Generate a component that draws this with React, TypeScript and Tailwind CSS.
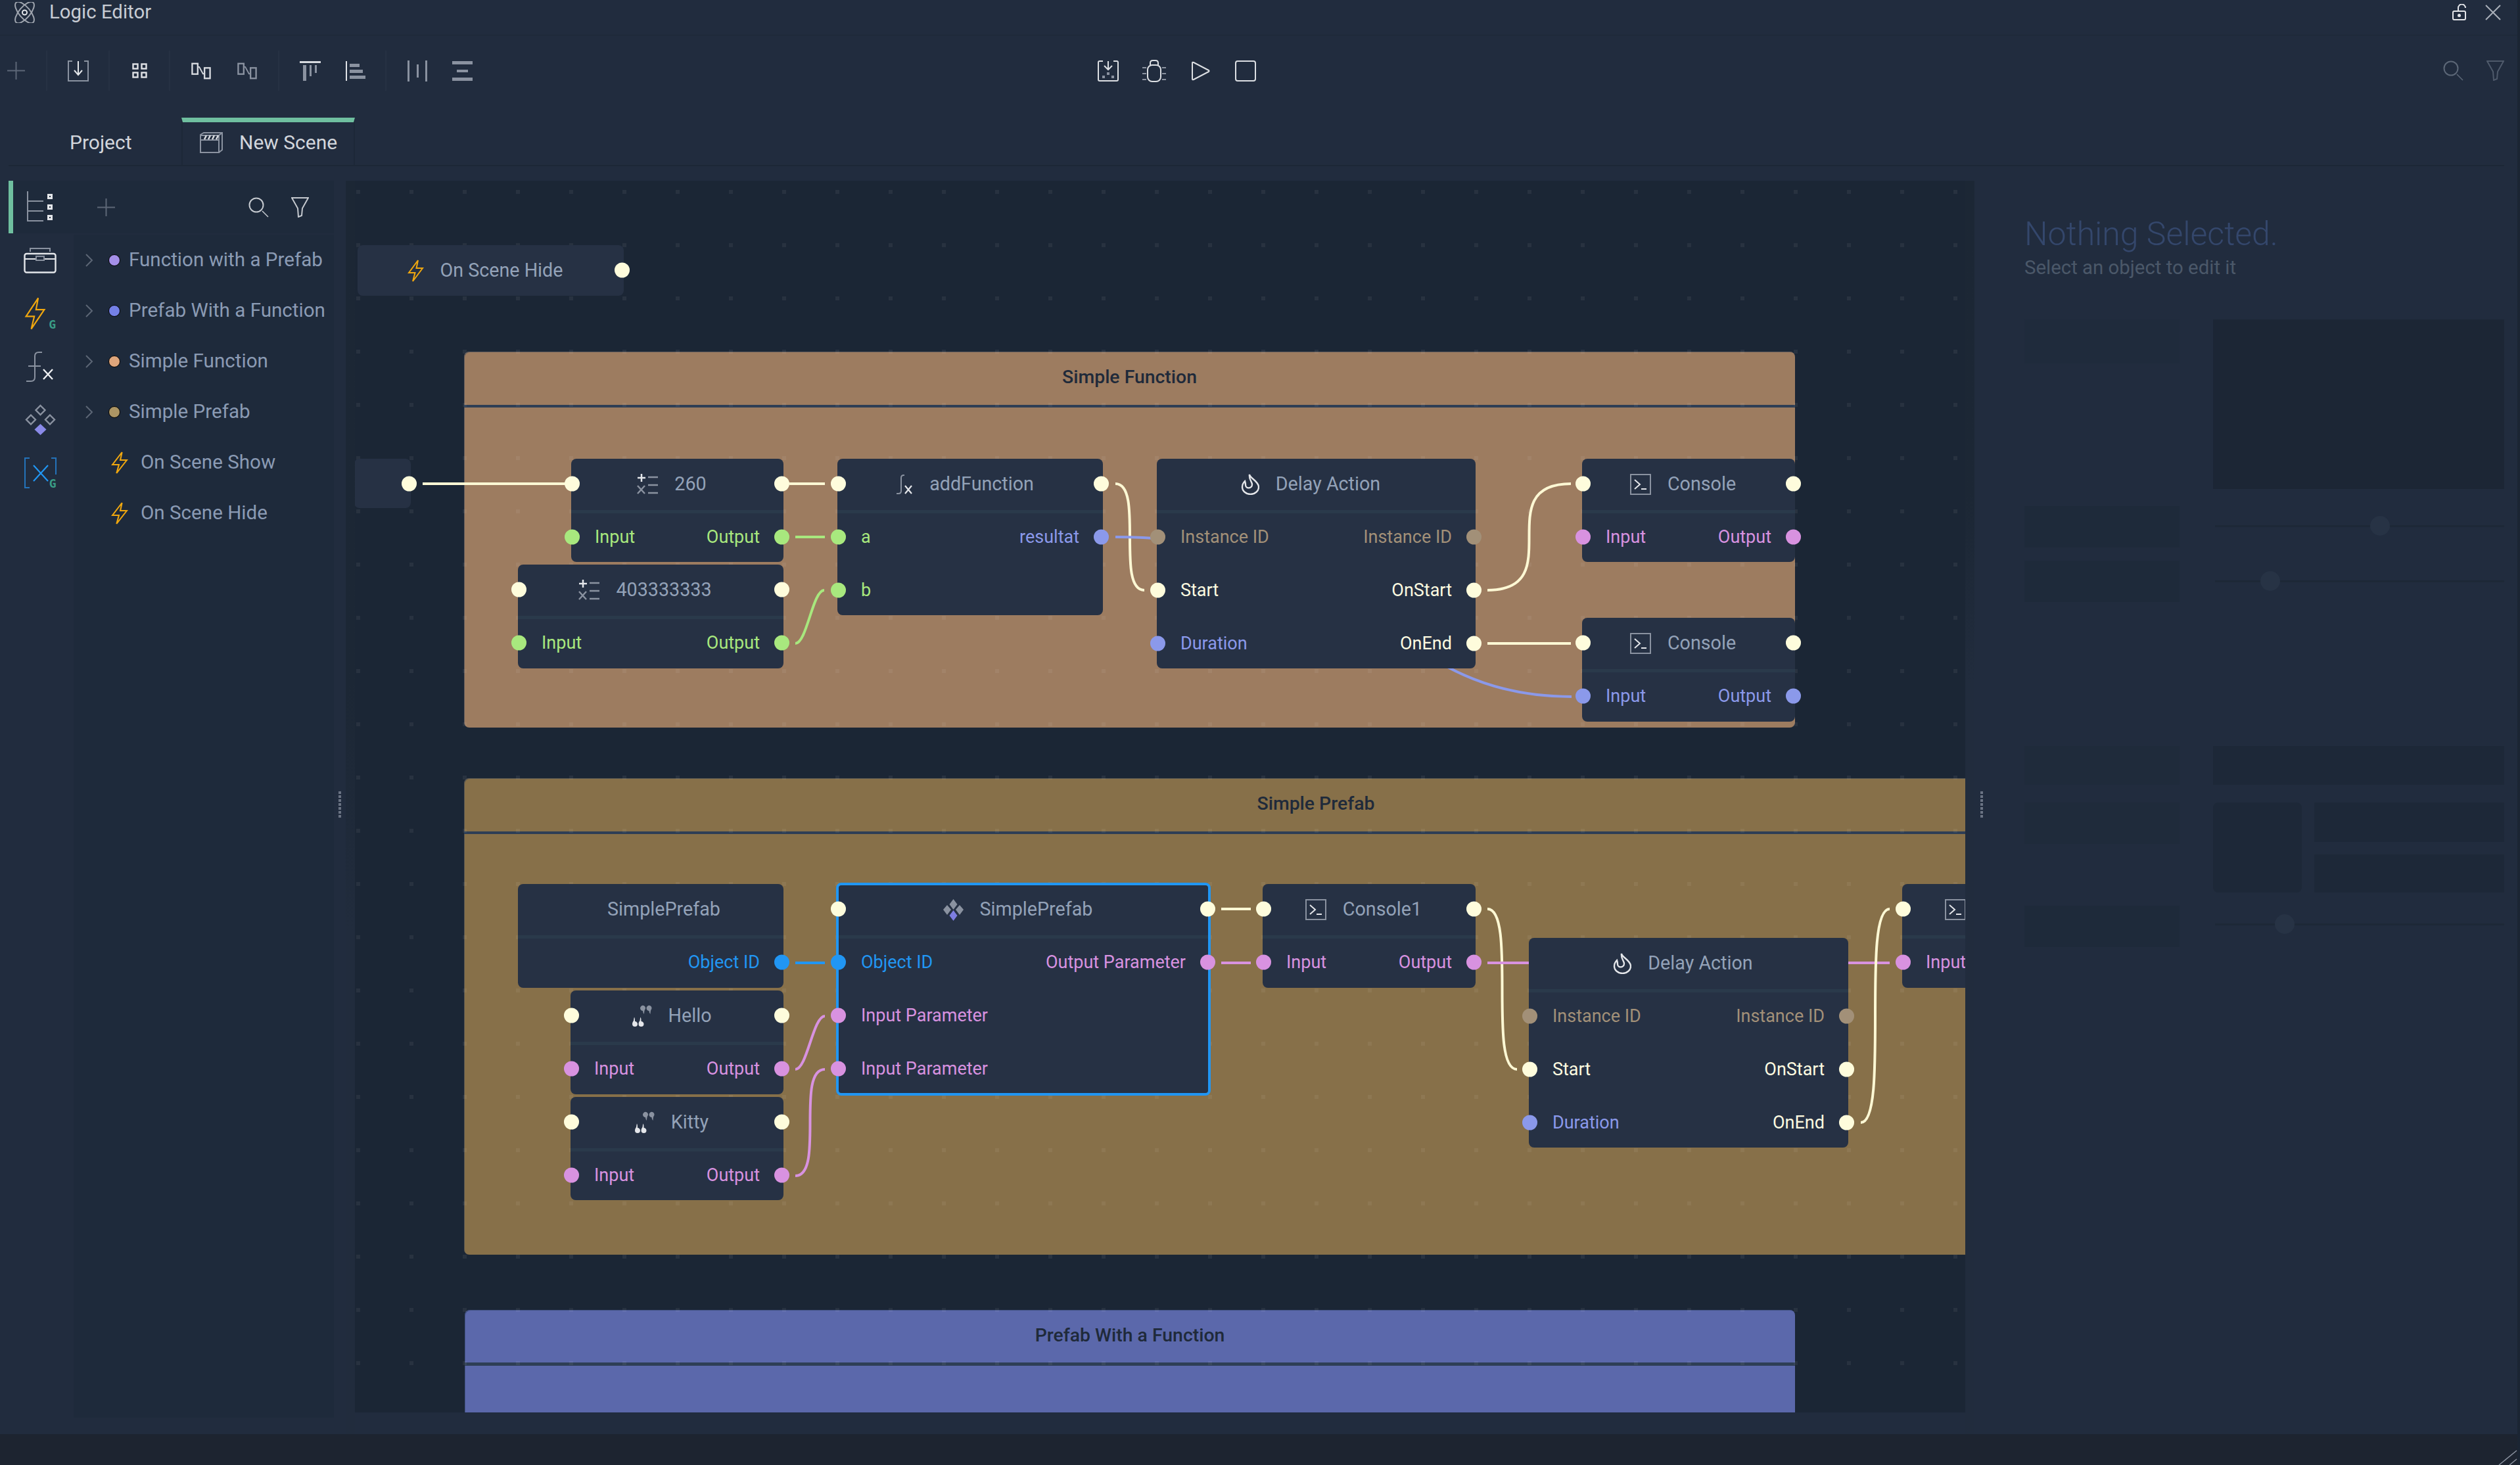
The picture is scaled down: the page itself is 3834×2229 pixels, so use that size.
import React from 'react';

type Tone = 'cream' | 'green' | 'blue' | 'pink' | 'sky' | 'tan';

const TEXT: Record<Tone, string> = {
  cream: 'text-[#fdfbe0]',
  green: 'text-[#a8e87e]',
  blue: 'text-[#8b99ea]',
  pink: 'text-[#d892e0]',
  sky: 'text-[#2196f3]',
  tan: 'text-[#a29078]',
};
const PIN: Record<Tone, string> = {
  cream: 'bg-[#fefcdc]',
  green: 'bg-[#a8e87e]',
  blue: 'bg-[#8b99ea]',
  pink: 'bg-[#d892e0]',
  sky: 'bg-[#2196f3]',
  tan: 'bg-[#a29078]',
};
const STROKE: Record<Tone, string> = {
  cream: '#fdf8d4',
  green: '#a8e87e',
  blue: '#8b99ea',
  pink: '#d892e0',
  sky: '#2196f3',
  tan: '#a29078',
};

const WHITE = '#e4e6ea';
const GREY = '#8a92a0';

/* ---------- icons ---------- */

function Lightning({ w = 25, h = 34 }: { w?: number; h?: number }) {
  return (
    <svg width={w} height={h} viewBox="0 0 25 34" preserveAspectRatio="none" fill="none" stroke="#f0a70f" strokeWidth={w > 28 ? 1.6 : 2}>
      <path d="M16 1 2 20h9.5L8 33l15-20h-9.5z" />
    </svg>
  );
}

function NumberIcon() {
  return (
    <svg width="32" height="32" viewBox="0 0 32 32" fill="none" stroke={GREY} strokeWidth="2.5">
      <path d="M7 0v12M1 6h12" stroke={WHITE} />
      <path d="M17 5h15M17 17h15M17 29h15" />
      <path d="M1 18l11 12M12 18 1 30" />
    </svg>
  );
}

function FxIcon() {
  return (
    <svg width="27" height="30" viewBox="0 0 27 30" fill="none">
      <path d="M14 1h-1c-3 0-4 2-4 4v20c0 2-1 4-4 4H2" stroke={GREY} strokeWidth="2" />
      <path d="M15 17l10 12M25 17 15 29" stroke={WHITE} strokeWidth="2.2" />
    </svg>
  );
}

function FlameIcon() {
  return (
    <svg width="28" height="32" viewBox="0 0 28 32" fill="none" stroke={WHITE} strokeWidth="2.4" strokeLinecap="round">
      <path d="M13 1c1 6 14 10 14 19a12.5 11 0 0 1-25 0c0-4 2-7 4-9 1 3 1 5 1 6 0 6 10 6 10-1 0-4-5-7-4-15z" />
    </svg>
  );
}

function ConsoleIcon() {
  return (
    <svg width="32" height="32" viewBox="0 0 32 32" fill="none">
      <rect x="1" y="1" width="30" height="30" stroke={GREY} strokeWidth="2" />
      <path d="M7 9l8 7-8 7" stroke={WHITE} strokeWidth="2" />
      <path d="M17 23h8" stroke={WHITE} strokeWidth="2" />
    </svg>
  );
}

function QuoteIcon() {
  return (
    <svg width="31" height="34" viewBox="0 0 31 34">
      <path d="M13 5a4 4 0 1 1 7 2.500c-.7 1.500-1 4-1 6.500-1-1-2-3-2-5-2.200 0-4-2-4-4zM22.500 5a4 4 0 1 1 7 2.500c-.7 1.500-1 4-1 6.500-1-1-2-3-2-5-2.200 0-4-2-4-4z" fill={GREY} />
      <path d="M9 29a4 4 0 1 1-8 0c0-2 1-4 2-5 .3-2 .5-4 1-5.500 1 2 1 4 1 6.500 2.200 0 4 2 4 4zM18.500 29a4 4 0 1 1-8 0c0-2 1-4 2-5 .3-2 .5-4 1-5.500 1 2 1 4 1 6.500 2.200 0 4 2 4 4z" fill={WHITE} />
    </svg>
  );
}

function PrefabIcon() {
  return (
    <svg width="31" height="33" viewBox="0 0 31 33">
      <path d="M15.500 0l6 8-6 8-6-8zM6 9l6 7-6 8-6-8zM25 9l6 7-6 8-6-8z" fill={GREY} />
      <path d="M15.500 17l6 8-6 8-6-8z" fill="#7d7de0" />
    </svg>
  );
}

function SearchIcon({ color }: { color: string }) {
  return (
    <svg width="31" height="31" viewBox="0 0 31 31" fill="none" stroke={color} strokeWidth="2">
      <circle cx="12" cy="12" r="10.500" />
      <path d="M21 21l9 9" strokeWidth="1.500" />
    </svg>
  );
}

function FilterIcon({ color }: { color: string }) {
  return (
    <svg width="27" height="31" viewBox="0 0 27 31" fill="none" stroke={color} strokeWidth="2">
      <path d="M1 1h25L17 17l-1 11-5 2-1-13z" />
    </svg>
  );
}

function PlusIcon() {
  return (
    <svg width="27" height="27" viewBox="0 0 27 27" stroke="#5d6777" strokeWidth="2">
      <path d="M13.500 0v27M0 13.500h27" />
    </svg>
  );
}

function Logo() {
  return (
    <svg width="33" height="32" viewBox="0 0 33 32" fill="none" stroke="#a0a6b0" strokeWidth="2">
      <ellipse cx="16.500" cy="16" rx="8.500" ry="20" transform="rotate(-40 16.500 16)" />
      <ellipse cx="16.500" cy="16" rx="8.500" ry="20" transform="rotate(40 16.500 16)" />
      <circle cx="16.500" cy="16" r="3.500" stroke="#e4e6ea" />
    </svg>
  );
}

function Flip({ bright }: { bright: boolean }) {
  const c = bright ? '#d8dbe0' : '#8a92a0';
  return (
    <svg width="30" height="26" viewBox="0 0 32 27" fill="none" stroke={c} strokeWidth="2.500">
      <rect x="1.500" y="1.500" width="9" height="17" />
      <rect x="21.500" y="8.500" width="9" height="17" />
      <path d="M10 7h3l6 11h2" strokeWidth="2" />
    </svg>
  );
}

function TopToolbar() {
  return (
    <div className="flex h-[107px] items-center pr-[20px]">
      <div className="flex w-[70px] pl-[11px]">
        <PlusIcon />
      </div>
      <Group w="w-[95px]">
        <svg width="32" height="32" viewBox="0 0 32 32" fill="none">
          <path d="M7 1H1v30h30V1h-6" stroke={GREY} strokeWidth="2" />
          <path d="M16 1v21M10 15l6 7 6-7" stroke={WHITE} strokeWidth="2" />
        </svg>
      </Group>
      <Group w="w-[92px]">
        <svg width="23" height="23" viewBox="0 0 23 23" fill="none" stroke="#e0e2e6" strokeWidth="2.400">
          <rect x="1.500" y="1.500" width="7" height="7" />
          <rect x="14.500" y="1.500" width="7" height="7" />
          <rect x="1.500" y="14.500" width="7" height="7" />
          <rect x="14.500" y="14.500" width="7" height="7" />
        </svg>
      </Group>
      <Group w="w-[166px]" gap="gap-[40px]">
        <Flip bright />
        <Flip bright={false} />
      </Group>
      <Group w="w-[163px]" gap="gap-[38px]">
        <svg width="32" height="30" viewBox="0 0 32 30">
          <rect x="0" y="0" width="32" height="3" fill="#d8dbe0" />
          <rect x="5" y="6" width="5" height="24" fill={GREY} />
          <rect x="15" y="6" width="3" height="17" fill={GREY} />
          <rect x="23" y="6" width="3" height="12" fill={GREY} />
        </svg>
        <svg width="30" height="30" viewBox="0 0 30 30">
          <rect x="0" y="0" width="2" height="30" fill="#e0e2e6" />
          <rect x="6" y="4" width="15" height="5" fill={GREY} />
          <rect x="6" y="13" width="20" height="5" fill={GREY} />
          <rect x="6" y="22" width="24" height="5" fill={GREY} />
        </svg>
      </Group>
      <Group w="w-[165px]" gap="gap-[38px]">
        <svg width="30" height="32" viewBox="0 0 30 32">
          <rect x="0" y="0" width="3" height="32" fill={GREY} />
          <rect x="14" y="6" width="3" height="20" fill={GREY} />
          <rect x="27" y="0" width="3" height="32" fill={GREY} />
        </svg>
        <svg width="31" height="30" viewBox="0 0 31 30">
          <rect x="0" y="0" width="31" height="5" fill={GREY} />
          <rect x="7" y="13" width="17" height="4" fill={GREY} />
          <rect x="0" y="25" width="31" height="5" fill={GREY} />
        </svg>
      </Group>

      <div className="ml-[919px] flex items-center">
        <svg width="32" height="32" viewBox="0 0 32 32" fill="none">
          <path d="M8 1H3Q1 1 1 3v26q0 2 2 2h26q2 0 2-2V3q0-2-2-2h-5" stroke="#dcdfe3" strokeWidth="2" />
          <path d="M16 1v13M10 8l6 6 6-6" stroke="#dcdfe3" strokeWidth="2" />
          <path d="M14 18h4v4h-4zM7 23h4v4H7zM21 23h4v4h-4z" fill={GREY} />
        </svg>
        <svg className="ml-[36px]" width="36" height="34" viewBox="0 0 36 34" fill="none">
          <rect x="8" y="8" width="20" height="25" rx="7" stroke="#dcdfe3" strokeWidth="2" />
          <path d="M12 8V5q0-4 4-4h4q4 0 4 4v3" stroke="#dcdfe3" strokeWidth="2" />
          <path d="M0 12h6M30 12h6M0 21h6M30 21h6M0 30h6M30 30h6" stroke={GREY} strokeWidth="2.200" />
        </svg>
        <svg className="ml-[39px]" width="28" height="30" viewBox="0 0 28 30" fill="none" stroke="#dcdfe3" strokeWidth="2" strokeLinejoin="round">
          <path d="M1 3q0-2 2-1l23 12q1 1 0 2L3 28q-2 1-2-1z" />
        </svg>
        <svg className="ml-[38px]" width="32" height="32" viewBox="0 0 32 32" fill="none" stroke="#dcdfe3" strokeWidth="2">
          <rect x="1" y="1" width="30" height="30" rx="3" />
        </svg>
      </div>

      <div className="ml-auto flex items-center gap-[35px]">
        <SearchIcon color="#5c6777" />
        <FilterIcon color="#4f5a6b" />
      </div>
    </div>
  );
}

function Group({ w, gap, children }: { w: string; gap?: string; children: React.ReactNode }) {
  return (
    <div className={`flex h-[61px] items-center justify-center border-l-2 border-[#263143] ${w} ${gap ?? ''}`}>
      {children}
    </div>
  );
}

/* ---------- left sidebar ---------- */

const treeItems = [
  { label: 'Function with a Prefab', dot: 'bg-[#a48fe8]' },
  { label: 'Prefab With a Function', dot: 'bg-[#7480e6]' },
  { label: 'Simple Function', dot: 'bg-[#dfa67c]' },
  { label: 'Simple Prefab', dot: 'bg-[#ac9564]' },
];

function Sidebar() {
  return (
    <div className="ml-[13px] flex w-[495px] shrink-0 flex-col pb-[25px]">
      <div className="flex h-[80px] items-center border-l-[7px] border-[#6fbf9f] bg-[#1e2a3b]">
        <div className="ml-[21px]">
          <svg width="39" height="48" viewBox="0 0 39 48" fill="none">
            <path d="M1 0v45h24M1 15h24M1 30h24" stroke={GREY} strokeWidth="2" />
            <path d="M31 4h8v8h-8zM31 20h8v8h-8zM31 36h8v8h-8z" fill="#e4e6ea" />
            <path d="M34 7h2v2h-2zM34 23h2v2h-2zM34 39h2v2h-2z" fill="#1e2a3b" />
          </svg>
        </div>
        <div className="ml-[68px]">
          <PlusIcon />
        </div>
        <div className="ml-auto mr-[38px] flex items-center gap-[34px]">
          <SearchIcon color="#c5c9cf" />
          <FilterIcon color="#c5c9cf" />
        </div>
      </div>
      <div className="flex min-h-0 flex-1">
        <div className="flex w-[99px] shrink-0 flex-col items-center pr-[3px]">
          <RailItem>
            <svg width="50" height="40" viewBox="0 0 50 40" fill="none">
              <path d="M10 7V2h30v5" stroke={GREY} strokeWidth="2" />
              <rect x="1.500" y="10" width="47" height="28.500" rx="3" stroke="#e4e6ea" strokeWidth="2.400" />
              <path d="M2 18h18M30 18h18" stroke="#e4e6ea" strokeWidth="2" />
              <rect x="19" y="14" width="12" height="6" stroke={GREY} strokeWidth="2" />
            </svg>
          </RailItem>
          <RailItem>
            <div className="relative h-[50px] w-[48px]">
              <Lightning w={33} h={50} />
              <span className="absolute bottom-[-1px] right-0 font-['DejaVu_Sans_Mono',monospace] text-[18px] font-bold leading-[18px] text-[#3a9c86]">G</span>
            </div>
          </RailItem>
          <RailItem>
            <svg width="42" height="46" viewBox="0 0 42 46" fill="none">
              <path d="M24 1h-5c-4 0-6 2-6 6v32c0 4-2 6-6 6H0M3 22h19" stroke={GREY} strokeWidth="2" />
              <path d="M26 27l14 15M40 27 26 42" stroke="#f0f1f3" strokeWidth="2.400" />
            </svg>
          </RailItem>
          <RailItem>
            <svg width="47" height="47" viewBox="0 0 47 47" fill="none">
              <path d="M23.500 2l7 7-7 7-7-7zM9 16.500l7 7-7 7-7-7zM38 16.500l7 7-7 7-7-7z" stroke={GREY} strokeWidth="2.400" />
              <path d="M23.500 30l9 8.500-9 8.500-9-8.500z" fill="#8a8ae8" />
            </svg>
          </RailItem>
          <RailItem>
            <div className="relative h-[47px] w-[49px]">
              <svg width="49" height="47" viewBox="0 0 49 47" fill="none">
                <path d="M8 1H1v45h7M41 1h7v25" stroke="#2473ba" strokeWidth="2" />
                <path d="M14 12l22 24M36 12 14 36" stroke="#2196f3" strokeWidth="2.200" />
              </svg>
              <span className="absolute bottom-[-2px] right-0 font-['DejaVu_Sans_Mono',monospace] text-[18px] font-bold leading-[18px] text-[#3a9c86]">G</span>
            </div>
          </RailItem>
        </div>
        <div className="mt-[2px] flex-1 bg-[#1e2a3b] font-['Roboto',sans-serif] text-[29.600px] text-[#8b9bb4]">
          {treeItems.map((item) => (
            <div key={item.label} className="flex h-[77px] items-center whitespace-nowrap pl-[18px]">
              <svg width="12" height="20" viewBox="0 0 12 20" fill="none" stroke="#5c6675" strokeWidth="2">
                <path d="M1 1l9 9-9 9" />
              </svg>
              <span className={`ml-[23px] h-[18px] w-[18px] rounded-full border border-black ${item.dot}`} />
              <span className="ml-[13px]">{item.label}</span>
            </div>
          ))}
          {['On Scene Show', 'On Scene Hide'].map((label) => (
            <div key={label} className="flex h-[77px] items-center whitespace-nowrap pl-[57px]">
              <Lightning w={26} h={34} />
              <span className="ml-[19px]">{label}</span>
            </div>
          ))}
        </div>
      </div>
    </div>
  );
}

function RailItem({ children }: { children: React.ReactNode }) {
  return <div className="flex h-[81px] shrink-0 items-center justify-center">{children}</div>;
}

/* ---------- logic canvas ---------- */

interface RowData {
  l?: [string, Tone];
  r?: [string, Tone];
}

interface NodeData {
  x: number;
  y: number;
  w: number;
  h: number;
  title?: string;
  icon?: React.ReactNode;
  spacer?: boolean;
  pins?: 'both' | 'right';
  rows?: RowData[];
  selected?: boolean;
}

const CONSOLE_W = 324;

const nodes: NodeData[] = [
  { x: 544, y: 373, w: 405, h: 77, title: 'On Scene Hide', icon: <Lightning w={25} h={34} />, pins: 'right' },
  { x: 539, y: 698, w: 86, h: 75, pins: 'right' },
  {
    x: 869, y: 698, w: 323, h: 157, title: '260', icon: <NumberIcon />, pins: 'both',
    rows: [{ l: ['Input', 'green'], r: ['Output', 'green'] }],
  },
  {
    x: 788, y: 859, w: 404, h: 158, title: '403333333', icon: <NumberIcon />, pins: 'both',
    rows: [{ l: ['Input', 'green'], r: ['Output', 'green'] }],
  },
  {
    x: 1274, y: 698, w: 404, h: 238, title: 'addFunction', icon: <FxIcon />, pins: 'both',
    rows: [{ l: ['a', 'green'], r: ['resultat', 'blue'] }, { l: ['b', 'green'] }],
  },
  {
    x: 1760, y: 698, w: 485, h: 319, title: 'Delay Action', icon: <FlameIcon />,
    rows: [
      { l: ['Instance ID', 'tan'], r: ['Instance ID', 'tan'] },
      { l: ['Start', 'cream'], r: ['OnStart', 'cream'] },
      { l: ['Duration', 'blue'], r: ['OnEnd', 'cream'] },
    ],
  },
  {
    x: 2407, y: 698, w: CONSOLE_W, h: 157, title: 'Console', icon: <ConsoleIcon />, pins: 'both',
    rows: [{ l: ['Input', 'pink'], r: ['Output', 'pink'] }],
  },
  {
    x: 2407, y: 940, w: CONSOLE_W, h: 158, title: 'Console', icon: <ConsoleIcon />, pins: 'both',
    rows: [{ l: ['Input', 'blue'], r: ['Output', 'blue'] }],
  },
  {
    x: 788, y: 1345, w: 404, h: 158, title: 'SimplePrefab', spacer: true,
    rows: [{ r: ['Object ID', 'sky'] }],
  },
  {
    x: 868, y: 1507, w: 324, h: 158, title: 'Hello', icon: <QuoteIcon />, pins: 'both',
    rows: [{ l: ['Input', 'pink'], r: ['Output', 'pink'] }],
  },
  {
    x: 868, y: 1669, w: 324, h: 157, title: 'Kitty', icon: <QuoteIcon />, pins: 'both',
    rows: [{ l: ['Input', 'pink'], r: ['Output', 'pink'] }],
  },
  {
    x: 1274, y: 1345, w: 566, h: 320, title: 'SimplePrefab', icon: <PrefabIcon />, pins: 'both', selected: true,
    rows: [
      { l: ['Object ID', 'sky'], r: ['Output Parameter', 'pink'] },
      { l: ['Input Parameter', 'pink'] },
      { l: ['Input Parameter', 'pink'] },
    ],
  },
  {
    x: 1921, y: 1345, w: CONSOLE_W, h: 158, title: 'Console1', icon: <ConsoleIcon />, pins: 'both',
    rows: [{ l: ['Input', 'pink'], r: ['Output', 'pink'] }],
  },
  {
    x: 2326, y: 1427, w: 486, h: 319, title: 'Delay Action', icon: <FlameIcon />,
    rows: [
      { l: ['Instance ID', 'tan'], r: ['Instance ID', 'tan'] },
      { l: ['Start', 'cream'], r: ['OnStart', 'cream'] },
      { l: ['Duration', 'blue'], r: ['OnEnd', 'cream'] },
    ],
  },
  {
    x: 2894, y: 1345, w: CONSOLE_W, h: 158, title: 'Console1', icon: <ConsoleIcon />, pins: 'both',
    rows: [{ l: ['Input', 'pink'], r: ['Output', 'pink'] }],
  },
];

// k = 1 keeps the control points over the far end, so the wire runs straight up at its middle
function curve(x0: number, y0: number, x1: number, y1: number, k = 1) {
  const d = (x1 - x0) * k;
  return `M${x0} ${y0}C${x0 + d} ${y0} ${x1 - d} ${y1} ${x1} ${y1}`;
}

const wires: { d: string; tone: Tone }[] = [
  { d: 'M643 736H862', tone: 'cream' },
  { d: 'M1201 736H1255', tone: 'cream' },
  { d: 'M1210 817H1255', tone: 'green' },
  { d: curve(1210, 979, 1254, 898, 0.4), tone: 'green' },
  { d: curve(1697, 736, 1741, 898), tone: 'cream' },
  { d: 'M1697 817C2100 817 2100 1060 2391 1060', tone: 'blue' },
  { d: curve(2263, 898, 2390, 736), tone: 'cream' },
  { d: 'M2263 979H2390', tone: 'cream' },
  { d: 'M1210 1465H1255', tone: 'sky' },
  { d: curve(1210, 1627, 1255, 1546, 0.4), tone: 'pink' },
  { d: curve(1210, 1789, 1255, 1627), tone: 'pink' },
  { d: 'M1858 1383H1903', tone: 'cream' },
  { d: 'M1858 1465H1903', tone: 'pink' },
  { d: curve(2263, 1383, 2308, 1627), tone: 'cream' },
  { d: 'M2263 1465H2875', tone: 'pink' },
  { d: curve(2831, 1708, 2875, 1383), tone: 'cream' },
];

const frames = [
  { x: 706, y: 535, w: 2025, h: 572, title: 'Simple Function', bg: 'bg-[#9d7c60]', line: 'border-b-4' },
  { x: 706, y: 1184, w: 2592, h: 725, title: 'Simple Prefab', bg: 'bg-[#877049]', line: 'border-b-4' },
  { x: 707, y: 1993, w: 2024, h: 320, title: 'Prefab With a Function', bg: 'bg-[#5b68ab]', line: 'border-b-[5px]' },
];

const CANVAS_X = 540;
const CANVAS_Y = 275;

function Pin({ tone, side }: { tone: Tone; side: 'l' | 'r' }) {
  const place = side === 'l' ? '-left-[10px]' : '-right-[9px]';
  return <span className={`absolute top-1/2 h-[23px] w-[23px] -translate-y-1/2 rounded-full ${PIN[tone]} ${place}`} />;
}

function LogicNode({ node }: { node: NodeData }) {
  const { rows = [] } = node;
  return (
    <div
      className="absolute rounded-[8px] bg-[#263144]"
      style={{ left: node.x - CANVAS_X, top: node.y - CANVAS_Y, width: node.w, height: node.h }}
    >
      {node.selected && <div className="absolute -inset-[2px] rounded-[8px] border-4 border-[#2196f3]" />}
      <div className="relative flex h-[76px] items-center justify-center gap-[25px] pr-[17px] pt-[2px]">
        {node.icon}
        {node.spacer && <span className="w-[32px]" />}
        {node.title && <span className="whitespace-nowrap text-[28.700px] text-[#93a2b8]">{node.title}</span>}
        {node.pins === 'both' && <Pin tone="cream" side="l" />}
        {node.pins && <Pin tone="cream" side="r" />}
      </div>
      {rows.length > 0 && <div className="mt-[2px] h-[5px] bg-[#2a3a4b]" />}
      {rows.length > 0 && (
        <div className="relative -mt-[5px]">
          {rows.map((row, i) => (
            <div key={i} className="relative flex h-[81px] items-center justify-between whitespace-nowrap px-[36px] pt-[2px]">
              {row.l && <span className={TEXT[row.l[1]]}>{row.l[0]}</span>}
              {!row.l && <span />}
              {row.r && <span className={TEXT[row.r[1]]}>{row.r[0]}</span>}
              {row.l && <Pin tone={row.l[1]} side="l" />}
              {row.r && <Pin tone={row.r[1]} side="r" />}
            </div>
          ))}
        </div>
      )}
    </div>
  );
}

function Canvas() {
  return (
    <div className="relative h-[1874px] w-[2450px] shrink-0 overflow-hidden bg-[#1b2635] font-['Roboto',sans-serif] text-[27px]">
      {frames.map((f) => (
        <div
          key={f.title}
          className={`absolute rounded-[8px] shadow-[inset_1px_1px_0_rgba(40,60,90,0.5)] ${f.bg}`}
          style={{ left: f.x - CANVAS_X, top: f.y - CANVAS_Y, width: f.w, height: f.h }}
        >
          <div className={`flex h-[85px] items-center justify-center border-[#2e3e55] pb-[2px] text-[28.400px] font-medium text-[#1f2a3a] ${f.line}`}>
            {f.title}
          </div>
        </div>
      ))}
      <svg className="absolute inset-0" width="2450" height="1874" viewBox="540 275 2450 1874" fill="none">
        <defs>
          <pattern id="dots" x="542" y="289" width="81" height="81" patternUnits="userSpaceOnUse">
            <rect width="6" height="6" fill="#ffffff" fillOpacity="0.055" />
          </pattern>
        </defs>
        <rect x="540" y="275" width="2450" height="1874" fill="url(#dots)" />
        {wires.map((w, i) => (
          <path key={i} d={w.d} stroke={STROKE[w.tone]} strokeWidth="4" />
        ))}
      </svg>
      {nodes.map((n, i) => (
        <LogicNode key={i} node={n} />
      ))}
    </div>
  );
}

/* ---------- right panel ---------- */

function Block({ className }: { className: string }) {
  return <div className={className} />;
}

function Slider({ value, className }: { value: number; className: string }) {
  return (
    <div className={`relative ml-[3px] flex h-[30px] items-center ${className}`}>
      <div className="h-[3px] w-full bg-[#1d2837]" />
      <div className="absolute top-0 h-[30px] w-[30px] -translate-x-1/2 rounded-full bg-[#273345]" style={{ left: `${value}%` }} />
    </div>
  );
}

function Handle({ className }: { className: string }) {
  return (
    <div className={`h-[40px] w-[4px] bg-[repeating-linear-gradient(to_bottom,#6a7383_0,#6a7383_4px,transparent_4px,transparent_6px)] ${className}`} />
  );
}

function Inspector() {
  return (
    <div className="relative min-w-0 flex-1 pl-[76px] font-['Roboto',sans-serif]">
      <Handle className="absolute left-[9px] top-[929px]" />
      <div className="h-[213px] pt-[51px]">
        <div className="text-[50px] font-light leading-[60px] text-[#34476c]">Nothing Selected.</div>
        <div className="mt-[3px] text-[29.400px] leading-[36px] text-[#4b5869]">Select an object to edit it</div>
      </div>
      <div className="-mt-[2px] flex gap-[51px]">
        <div className="flex w-[236px] flex-col">
          <Block className="h-[67px] bg-[#1f2b3c]" />
          <Block className="mt-[217px] h-[63px] bg-[#1e2a3a]" />
          <Block className="mt-[20px] h-[63px] bg-[#1e2a3a]" />
          <Block className="mt-[219px] h-[59px] bg-[#1f2b3b]" />
          <Block className="mt-[27px] h-[63px] bg-[#1f2b3b]" />
          <Block className="mt-[94px] h-[63px] bg-[#1e2a3a]" />
        </div>
        <div className="flex w-[443px] flex-col">
          <Block className="h-[258px] bg-[#1c2635]" />
          <Slider value={57} className="mt-[41px]" />
          <Slider value={19} className="mt-[54px]" />
          <Block className="mt-[236px] h-[59px] bg-[#1d2838]" />
          <div className="mt-[27px] flex gap-[19px]">
            <Block className="h-[137px] w-[135px] rounded-[8px] bg-[#1d2838]" />
            <div className="flex flex-1 flex-col">
              <Block className="h-[60px] bg-[#1d2838]" />
              <Block className="mt-[19px] h-[58px] bg-[#1d2838]" />
            </div>
          </div>
          <Slider value={24} className="mt-[33px]" />
        </div>
      </div>
    </div>
  );
}

/* ---------- page ---------- */

export default function App() {
  return (
    <div className="flex h-[2229px] w-[3834px] flex-col overflow-hidden border-r-4 border-[#1b2533] bg-[#212c3e] font-['Roboto',sans-serif]">
      {/* 제목 표시줄 */}
      <div className="flex h-[54px] shrink-0 items-center border-b border-[#1e2837] pb-[16px] pl-[21px] pr-[25px]">
        <Logo />
        <span className="ml-[21px] text-[29.400px] text-[#c8ccd4]">Logic Editor</span>
        <div className="ml-auto flex items-center gap-[28px]">
          <svg width="22" height="25" viewBox="0 0 22 25" fill="none" stroke="#e4e6ea" strokeWidth="2">
            <rect x="1" y="11" width="19" height="13" rx="2" />
            <path d="M9 11V6a5 5 0 0 1 11 0" />
            <circle cx="10.500" cy="17.500" r="1.500" fill="#e4e6ea" />
          </svg>
          <svg width="24" height="24" viewBox="0 0 24 24" stroke="#aab0ba" strokeWidth="2">
            <path d="M1 1l22 22M23 1 1 23" />
          </svg>
        </div>
      </div>

      <TopToolbar />

      {/* 탭 */}
      <div className="mr-[20px] ml-[13px] flex h-[92px] shrink-0 items-end border-b-2 border-[#1c2736] text-[30px] text-[#d2d6dc]">
        <div className="flex h-[72px] w-[263px] items-center pl-[93px] pt-[2px]">Project</div>
        <div className="flex h-[72px] w-[264px] items-center border-x-2 border-t-[7px] border-x-[#1d2838] border-t-[#6fbf9f] pb-[4px] pl-[26px]">
          <svg width="35" height="32" viewBox="0 0 35 32" fill="none" stroke={GREY} strokeWidth="2">
            <path d="M1 12h28v19H1zM1 12V4l5-3h28v26l-5 4M29 12V5H1M29 5l5-4" />
            <path d="M7 11l3-6M13 11l3-6M19 11l3-6M25 11l3-6" stroke="#d8dbe0" strokeWidth="2.500" />
          </svg>
          <span className="ml-[25px] whitespace-nowrap">New Scene</span>
        </div>
      </div>

      {/* 본문 */}
      <div className="flex min-h-0 flex-1 pt-[22px]">
        <Sidebar />
        <div className="flex w-[18px] shrink-0 justify-center pt-[929px]">
          <Handle className="" />
        </div>
        <div className="w-[14px] shrink-0 bg-gradient-to-b from-[#1c2735] from-40% to-[#212c3d] to-60%" />
        <Canvas />
        <div className="w-[14px] shrink-0 bg-gradient-to-b from-[#1c2735] from-25% to-[#212c3d] to-40%" />
        <Inspector />
      </div>

      {/* 상태 표시줄 */}
      <div className="flex h-[47px] shrink-0 items-end justify-end bg-[#1d2430]">
        <svg width="30" height="24" viewBox="0 0 30 24" stroke="#8a92a0" strokeWidth="1.500">
          <path d="M2 24 29 2M18 24l11-9" />
        </svg>
      </div>
    </div>
  );
}
